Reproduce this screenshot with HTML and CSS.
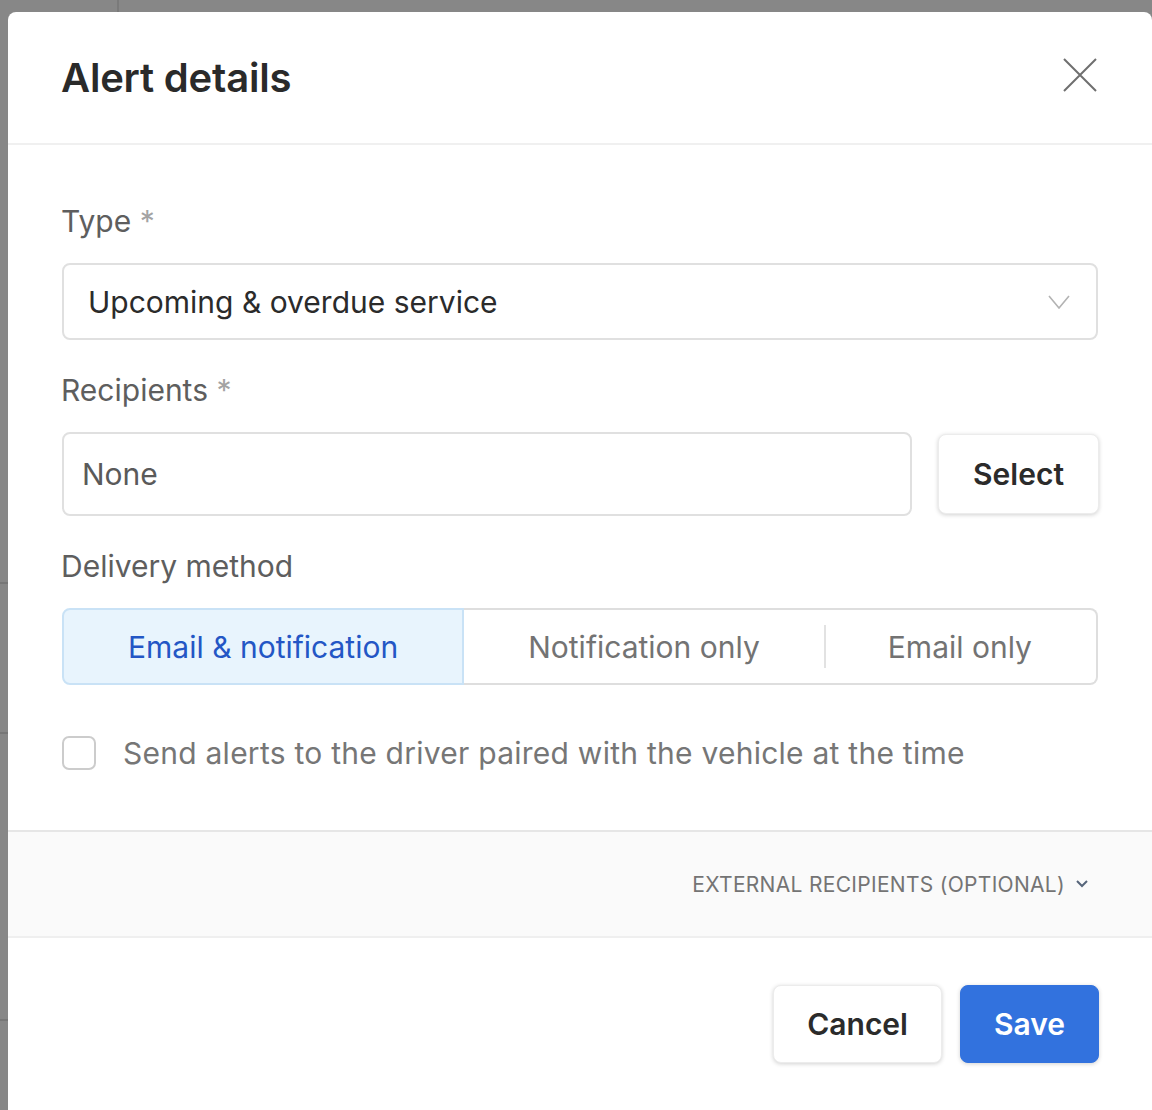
FILE: index.html
```html
<!DOCTYPE html>
<html lang="en">
<head>
  <meta charset="UTF-8" />
  <title>Alert details</title>
  <link rel="stylesheet" href="styles.css">
</head>
<body>
  <!-- MODAL -->
  <div class="modal">
    <div class="modal-header">
      <h1>Alert details</h1>
      <button class="close" aria-label="Close">
        <svg width="34" height="34" viewBox="0 0 34 34">
          <path d="M1 1 L33 33 M33 1 L1 33" stroke="#6f6f6f" stroke-width="2" fill="none" />
        </svg>
      </button>
    </div>

    <div class="modal-body">
      <label class="field-label">Type <span class="req">*</span></label>
      <div class="select">
        <span>Upcoming &amp; overdue service</span>
        <svg width="22" height="14" viewBox="0 0 22 14">
          <path d="M1 1 L11 13 L21 1" stroke="#b3b3b3" stroke-width="1.6" fill="none" />
        </svg>
      </div>

      <label class="field-label">Recipients <span class="req">*</span></label>
      <div class="recipients">
        <div class="input">None</div>
        <button class="btn">Select</button>
      </div>

      <label class="field-label">Delivery method</label>
      <div class="segments">
        <div class="segment active">Email &amp; notification</div>
        <div class="segment">Notification only</div>
        <div class="segment last">Email only</div>
      </div>

      <div class="check-row">
        <span class="checkbox"></span>
        <span>Send alerts to the driver paired with the vehicle at the time</span>
      </div>
    </div>

    <div class="external">
      <span>EXTERNAL RECIPIENTS (OPTIONAL)</span>
      <svg width="14" height="10" viewBox="0 0 14 10">
        <path d="M2 2 L7 7 L12 2" stroke="#56657a" stroke-width="2" fill="none" />
      </svg>
    </div>

    <div class="modal-footer">
      <button class="btn">Cancel</button>
      <button class="btn primary">Save</button>
    </div>
  </div>
</body>
</html>
```

FILE: styles.css
```css
* {
  box-sizing: border-box;
  font-family: 'Inter', 'Liberation Sans', sans-serif;
}

body {
  margin: 0;
  height: 1110px;
  overflow: hidden;
  background:
    linear-gradient(#7a7a7a, #7a7a7a) 117px 0 / 2px 12px no-repeat,
    linear-gradient(#777, #777) 0 582px / 8px 2px no-repeat,
    linear-gradient(#777, #777) 0 732px / 8px 2px no-repeat,
    linear-gradient(#777, #777) 0 1019px / 8px 2px no-repeat,
    #878787;
  padding: 12px 0 0 8px;
}

.modal {
  background: white;
  width: 1144px;
  min-height: 1098px;
  border-radius: 8px 8px 0 0;
}

.modal-header {
  height: 133px;
  padding: 0 54px;
  display: flex;
  justify-content: space-between;
  align-items: center;
  border-bottom: 2px solid #f0f0f0;
}

.modal-header h1 {
  margin: 0 0 0 -1px;
  font-size: 40px;
  font-weight: 600;
  color: #2a2a2a;
  letter-spacing: -0.2px;
}

.close {
  background: none;
  border: none;
  padding: 0;
  margin-top: -6px;
  margin-right: 1px;
  display: flex;
}

.modal-body {
  padding: 58px 54px 59px;
  display: flex;
  flex-direction: column;
}

.field-label {
  font-size: 30px;
  line-height: 36px;
  color: #5e5e5e;
  margin-bottom: 24px;
  margin-left: -1px;
}

.req {
  color: #a3a3a3;
}

.select {
  height: 77px;
  border: 2px solid #e0e0e0;
  border-radius: 8px;
  padding: 0 26px 0 24px;
  display: flex;
  align-items: center;
  justify-content: space-between;
  font-size: 30px;
  color: #2b2b2b;
  margin-bottom: 32px;
}

.recipients {
  display: flex;
  gap: 26px;
  align-items: center;
  margin-bottom: 32px;
}

.input {
  flex: 1;
  height: 84px;
  border: 2px solid #e0e0e0;
  border-radius: 8px;
  padding: 0 18px;
  display: flex;
  align-items: center;
  font-size: 30px;
  color: #5a5a5a;
}

.btn {
  height: 80px;
  padding: 0 34px;
  background: white;
  border: 1px solid #ececec;
  border-radius: 8px;
  box-shadow: 0 1px 4px rgba(0,0,0,0.18);
  font-size: 30px;
  font-weight: 600;
  color: #2b2b2b;
}

.recipients .btn {
  margin-right: -1px;
}

.btn.primary {
  background: #3272de;
  border-color: #3272de;
  color: white;
}

.segments {
  display: flex;
  height: 77px;
  margin-bottom: 50px;
}

.segment {
  flex: 1 1 auto;
  display: flex;
  align-items: center;
  justify-content: center;
  font-size: 30px;
  color: #737373;
  border-top: 2px solid #dedede;
  border-bottom: 2px solid #dedede;
  position: relative;
}

.segment.active {
  background: #e8f4fd;
  color: #2356c5;
  border: 2px solid #c9e2f6;
  border-radius: 8px 0 0 8px;
}

.segment.last {
  border-right: 2px solid #dedede;
  border-radius: 0 8px 8px 0;
}

.segment.last::before {
  content: '';
  position: absolute;
  left: 0;
  top: 15px;
  bottom: 15px;
  width: 2px;
  background: #e2e2e2;
}

.check-row {
  display: flex;
  align-items: center;
  gap: 27px;
  font-size: 30px;
  letter-spacing: 0.25px;
  color: #767676;
}

.checkbox {
  width: 34px;
  height: 34px;
  border: 2px solid #cccccc;
  border-radius: 7px;
}

.external {
  height: 108px;
  background: #fafafa;
  border-top: 2px solid #e6e6e6;
  border-bottom: 2px solid #efefef;
  display: flex;
  justify-content: flex-end;
  align-items: center;
  gap: 10px;
  padding: 0 63px;
  font-size: 21px;
  letter-spacing: 0.3px;
  color: #747474;
}

.modal-footer {
  display: flex;
  justify-content: flex-end;
  gap: 18px;
  padding: 47px 53px;
}

.modal-footer .btn {
  height: 78px;
  padding: 0 33px;
}
```
